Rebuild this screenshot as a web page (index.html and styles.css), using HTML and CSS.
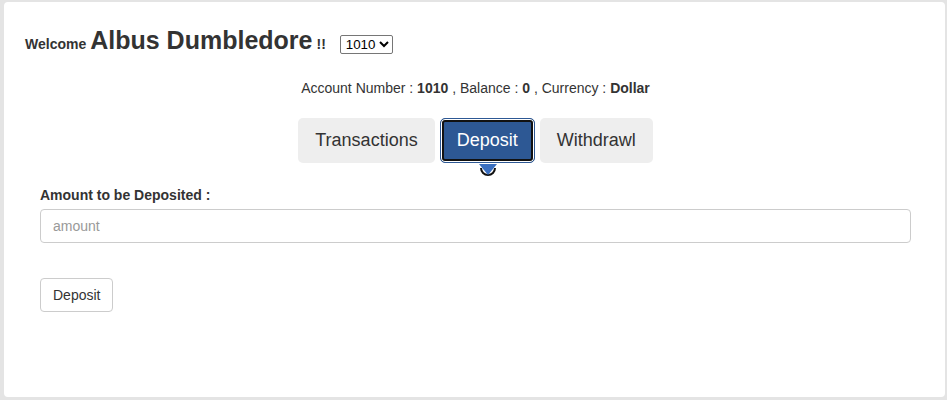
FILE: index.html
```html
<!DOCTYPE html>
<html>
<head>
<meta charset="utf-8">
<link rel="stylesheet" href="styles.css">
</head>
<body>
<div class="card">
  <div class="welcome">
    <span class="w-small">Welcome</span>
    <span class="w-name">Albus Dumbledore</span>
    <span class="w-small">!!</span>
    <select class="acct-select"><option>1010</option></select>
  </div>
  <div class="account-info">Account Number : <b>1010</b> , Balance : <b>0</b> , Currency : <b>Dollar</b></div>
  <div class="tabs">
    <button class="tab">Transactions</button>
    <button class="tab active">Deposit<svg class="tab-arrow" width="22" height="16" viewBox="0 0 22 16"><path d="M4 5 A7 7 0 0 0 18 5" fill="none" stroke="#111" stroke-width="2"/><path d="M2 1 L20 1 L11 12 Z" fill="#3a6fc0"/></svg></button>
    <button class="tab">Withdrawl</button>
  </div>
  <div class="form">
    <label class="form-label">Amount to be Deposited :</label>
    <input class="form-input" type="text" placeholder="amount">
    <button class="btn">Deposit</button>
  </div>
</div>
</body>
</html>
```
FILE: styles.css
```css
html, body {
  margin: 0;
  padding: 0;
  background: #e4e4e4;
}
body {
  padding: 2px 2px 2px 4px;
  font-family: "Liberation Sans", Arial, sans-serif;
  color: #333;
  font-size: 14px;
}
.card {
  background: #fff;
  border-radius: 4px;
  height: 395px;
  box-sizing: border-box;
  padding: 24px 18px 0 20px;
}
.welcome {
  display: flex;
  align-items: baseline;
  gap: 4px;
  padding-left: 1px;
}
.w-small {
  font-weight: bold;
  font-size: 14px;
}
.w-name {
  font-weight: bold;
  font-size: 25px;
  line-height: 28px;
}
.acct-select {
  margin-left: 10px;
  font-family: "Liberation Sans", Arial, sans-serif;
  font-size: 13.33px;
  color: #000;
  border: 1px solid #767676;
  border-radius: 2px;
  background: #fff;
  padding: 0 0 0 1px;
  height: 19px;
}
.account-info {
  text-align: center;
  margin-top: 24px;
  line-height: 20px;
}
.tabs {
  display: flex;
  justify-content: center;
  gap: 5px;
  margin-top: 20px;
}
.tab {
  position: relative;
  font-family: "Liberation Sans", Arial, sans-serif;
  font-size: 18px;
  line-height: 25px;
  color: #333;
  background: #eee;
  border: 0;
  border-radius: 5px;
  padding: 10px 17px;
}
.tab.active {
  background: #2d5894;
  color: #fff;
  padding: 9px 16px;
  border: 1px solid #2d5894;
  box-shadow: inset 0 0 0 1px #fff, inset 0 0 0 3px #111;
}
.tab-arrow {
  position: absolute;
  left: 36px;
  top: 44px;
}
.form {
  padding: 0 16px;
  margin-top: 22px;
  display: flex;
  flex-direction: column;
  align-items: flex-start;
}
.form-label {
  font-weight: bold;
  line-height: 20px;
  margin-bottom: 4px;
}
.form-input {
  box-sizing: border-box;
  width: 100%;
  height: 34px;
  border: 1px solid #ccc;
  border-radius: 4px;
  padding: 6px 12px;
  font-family: "Liberation Sans", Arial, sans-serif;
  font-size: 14px;
  color: #555;
}
.form-input::placeholder {
  color: #999;
}
.btn {
  margin-top: 35px;
  height: 34px;
  padding: 6px 12px;
  background: #fff;
  border: 1px solid #ccc;
  border-radius: 4px;
  font-family: "Liberation Sans", Arial, sans-serif;
  font-size: 14px;
  color: #333;
}
```
